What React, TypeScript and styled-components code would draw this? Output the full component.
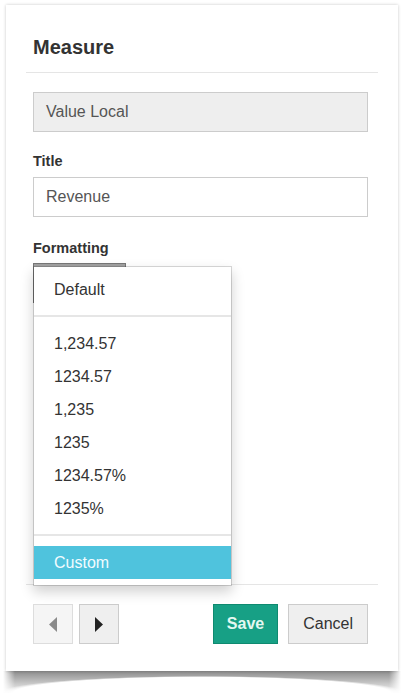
import React from "react";
import styled, { createGlobalStyle } from "styled-components";

const GlobalStyle = createGlobalStyle`
  html, body { margin: 0; padding: 0; background: #ffffff; }
  body { font-family: "Liberation Sans", Arial, Helvetica, sans-serif; color: #333; }
  * { box-sizing: border-box; }
`;

const Page = styled.div`
  padding: 5px 0 0 6px;
  width: 412px;
`;

const Card = styled.div`
  position: relative;
  width: 392px;
  height: 666px;
  background: #fff;
  display: flex;
  flex-direction: column;
  box-shadow: 0 0 3px rgba(0, 0, 0, 0.22);
`;

const CurlShadow = styled.div`
  width: 398px;
  height: 22px;
  margin-left: -3px;
  background-image:
    radial-gradient(51% 17px at 50% 100%, #ffffff 93%, rgba(255, 255, 255, 0) 100%),
    linear-gradient(to right, #ffffff 0%, rgba(255, 255, 255, 0) 3%, rgba(255, 255, 255, 0) 97%, #ffffff 100%),
    linear-gradient(to bottom, rgba(0, 0, 0, 0.45) 0%, rgba(0, 0, 0, 0.04) 100%);
`;

const Header = styled.div`
  margin: 0 20px;
  padding: 30px 7px 13px;
  border-bottom: 1px solid #e5e5e5;
`;

const Heading = styled.h2`
  margin: 0;
  font-size: 20px;
  line-height: 24px;
  font-weight: bold;
  color: #333;
`;

const Body = styled.div`
  position: relative;
  flex: 1;
  margin: 0 20px;
  padding: 19px 10px 0 7px;
`;

const Field = styled.div<{ $readOnly?: boolean }>`
  height: 40px;
  display: flex;
  align-items: center;
  padding: 0 12px;
  border: 1px solid #cccccc;
  background: ${(p) => (p.$readOnly ? "#eeeeee" : "#ffffff")};
  font-size: 16px;
  color: #555;
`;

const Label = styled.div<{ $top: number; $bottom: number }>`
  margin-top: ${(p) => p.$top}px;
  margin-bottom: ${(p) => p.$bottom}px;
  font-size: 14.5px;
  line-height: 20px;
  font-weight: bold;
  color: #333;
`;

const SelectWrap = styled.div`
  position: relative;
`;

const SelectButton = styled.div`
  width: 93px;
  height: 40px;
  background: #a2a2a2;
  border: 1px solid #777;
`;

const Menu = styled.ul`
  position: absolute;
  top: 3px;
  left: 0;
  z-index: 10;
  width: 199px;
  margin: 0;
  padding: 6px 0 6px;
  list-style: none;
  background: #fff;
  background-clip: padding-box;
  border: 1px solid rgba(0, 0, 0, 0.15);
  box-shadow: 0 6px 12px rgba(0, 0, 0, 0.18);
`;

const MenuItem = styled.li<{ $active?: boolean }>`
  height: 33px;
  line-height: 33px;
  padding: 0 20px;
  font-size: 16px;
  color: ${(p) => (p.$active ? "#f2fcff" : "#333")};
  background: ${(p) => (p.$active ? "#4fc3dd" : "transparent")};
`;

const MenuDivider = styled.li`
  height: 2px;
  margin: 9px 0 10px;
  background: #e6e6e6;
`;

const Footer = styled.div`
  margin: 0 20px;
  padding: 19px 10px 27px 7px;
  border-top: 1px solid #e5e5e5;
  display: flex;
  align-items: center;
`;

const NavGroup = styled.div`
  display: flex;
  gap: 6px;
`;

const NavButton = styled.button<{ $disabled?: boolean }>`
  width: 40px;
  height: 40px;
  padding: 0;
  display: flex;
  align-items: center;
  justify-content: center;
  background: ${(p) => (p.$disabled ? "#f5f5f5" : "#efefef")};
  border: 1px solid ${(p) => (p.$disabled ? "#dddddd" : "#cccccc")};
  color: ${(p) => (p.$disabled ? "#8a8a8a" : "#222")};
`;

const ActionGroup = styled.div`
  margin-left: auto;
  display: flex;
  gap: 10px;
`;

const SaveButton = styled.button`
  height: 40px;
  padding: 0 13px;
  background: #17a085;
  border: 1px solid #0f8a70;
  color: #e4f8f1;
  font-family: "Liberation Sans", Arial, sans-serif;
  font-size: 16px;
  font-weight: bold;
`;

const CancelButton = styled.button`
  height: 40px;
  padding: 0 14px;
  background: #efefef;
  border: 1px solid #cccccc;
  color: #333;
  font-family: "Liberation Sans", Arial, sans-serif;
  font-size: 16px;
`;

const formats = ["1,234.57", "1234.57", "1,235", "1235", "1234.57%", "1235%"];

export default function App() {
  return (
    <>
      <GlobalStyle />
      <Page>
        <Card>
          <Header>
            <Heading>Measure</Heading>
          </Header>
          <Body>
            <Field $readOnly>Value Local</Field>
            <Label $top={19} $bottom={6}>Title</Label>
            <Field>Revenue</Field>
            <Label $top={21} $bottom={5}>Formatting</Label>
            <SelectWrap>
              <SelectButton />
              <Menu>
                <MenuItem>Default</MenuItem>
                <MenuDivider />
                {formats.map((f) => (
                  <MenuItem key={f}>{f}</MenuItem>
                ))}
                <MenuDivider />
                <MenuItem $active>Custom</MenuItem>
              </Menu>
            </SelectWrap>
          </Body>
          <Footer>
            <NavGroup>
              <NavButton $disabled aria-label="Previous">
                <svg width="8" height="15" viewBox="0 0 8 15">
                  <polygon points="8,0 8,15 0,7.5" fill="currentColor" />
                </svg>
              </NavButton>
              <NavButton aria-label="Next">
                <svg width="8" height="15" viewBox="0 0 8 15">
                  <polygon points="0,0 8,7.5 0,15" fill="currentColor" />
                </svg>
              </NavButton>
            </NavGroup>
            <ActionGroup>
              <SaveButton>Save</SaveButton>
              <CancelButton>Cancel</CancelButton>
            </ActionGroup>
          </Footer>
        </Card>
        <CurlShadow />
      </Page>
    </>
  );
}
